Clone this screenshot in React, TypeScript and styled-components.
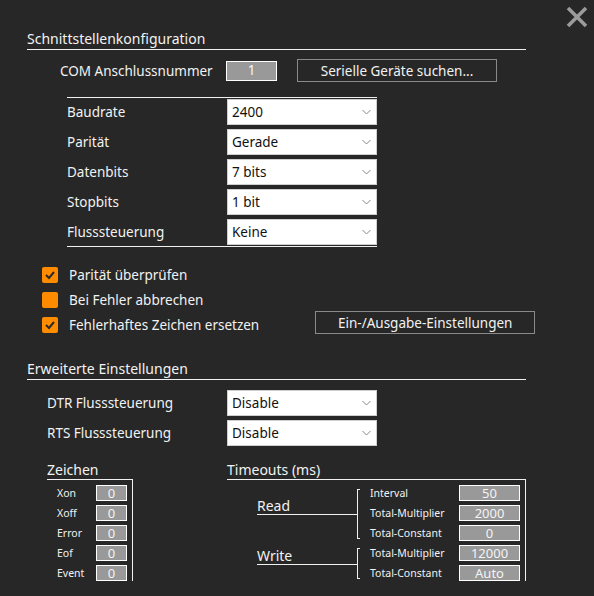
import React from "react";
import styled, { createGlobalStyle } from "styled-components";

const Global = createGlobalStyle`
  html, body { margin: 0; padding: 0; background: #272727; }
  body { font-family: "Noto Sans", "Open Sans", sans-serif; color: #f2f2f2; }
  * { box-sizing: border-box; }
`;

const Window = styled.div`
  position: relative;
  width: 594px;
  height: 596px;
  background: #272727;
  overflow: hidden;
`;

const Close = styled.button`
  position: absolute;
  top: 5px;
  right: 5px;
  width: 24px;
  height: 24px;
  padding: 0;
  border: 0;
  background: transparent;
  display: flex;
  align-items: center;
  justify-content: center;
`;

const Content = styled.div`
  height: 581px;
  overflow: hidden;
  padding-left: 27px;
  display: flex;
  flex-direction: column;
`;

const SectionTitle = styled.div<{ $top: number }>`
  width: 499px;
  margin-top: ${(p) => p.$top}px;
  height: 21px;
  line-height: 19px;
  font-size: 14px;
  border-bottom: 1px solid #f0f0f0;
`;

const ComRow = styled.div`
  display: flex;
  align-items: center;
  margin-top: 9px;
  padding-left: 33px;
  height: 23px;
`;

const Label = styled.div<{ $w: number }>`
  width: ${(p) => p.$w}px;
  font-size: 13.5px;
  white-space: nowrap;
`;

const ValueBox = styled.div<{ $w: number; $h: number; $size?: number }>`
  width: ${(p) => p.$w}px;
  height: ${(p) => p.$h}px;
  background: #999999;
  border: 1px solid #ffffff;
  color: #f4f4f4;
  font-size: ${(p) => p.$size ?? 13}px;
  display: flex;
  align-items: center;
  justify-content: center;
  line-height: 1;
`;

const OutlineButton = styled.button<{ $w: number }>`
  width: ${(p) => p.$w}px;
  height: 23px;
  background: transparent;
  border: 1px solid #8a8a8a;
  color: #f2f2f2;
  font-family: "Noto Sans", "Open Sans", sans-serif;
  font-size: 13.5px;
  padding: 0;
  line-height: 20px;
`;

const ButtonSlot = styled.div<{ $ml?: number; $mt?: number }>`
  margin-left: ${(p) => (p.$ml === undefined ? "auto" : `${p.$ml}px`)};
  margin-top: ${(p) => p.$mt ?? 0}px;
`;

const SettingsBlock = styled.div`
  margin-top: 15px;
  margin-left: 40px;
  width: 310px;
  border-top: 1px solid #f0f0f0;
  border-bottom: 1px solid #f0f0f0;
  padding: 1px 0 1px;
  display: flex;
  flex-direction: column;
  gap: 4px;
`;

const FieldRow = styled.div<{ $indent?: number; $top?: number }>`
  display: flex;
  align-items: center;
  height: 26px;
  margin-left: ${(p) => p.$indent ?? 0}px;
  margin-top: ${(p) => p.$top ?? 0}px;
`;

const SelectBox = styled.div`
  width: 150px;
  height: 26px;
  background: #ffffff;
  border: 1px solid #cfcfcf;
  color: #111;
  font-size: 13.5px;
  display: flex;
  align-items: center;
  justify-content: space-between;
  padding: 0 5px 0 4px;
`;

const CheckGroup = styled.div`
  margin-top: 20px;
  margin-left: 15px;
  display: flex;
  flex-direction: column;
  gap: 9px;
`;

const CheckRow = styled.div`
  display: flex;
  align-items: center;
  height: 16px;
`;

const Box = styled.span`
  width: 16px;
  height: 16px;
  border-radius: 2px;
  background: #ff8c00;
  display: flex;
  align-items: center;
  justify-content: center;
  flex: none;
`;

const CheckText = styled.span`
  margin-left: 11px;
  font-size: 13.5px;
  white-space: nowrap;
`;

const LowerGrid = styled.div`
  display: flex;
  margin-top: 14px;
  padding-left: 20px;
  flex: 1;
  min-height: 0;
`;

const Column = styled.div<{ $w: number; $ml: number }>`
  width: ${(p) => p.$w}px;
  margin-left: ${(p) => p.$ml}px;
  display: flex;
  flex-direction: column;
`;

const SubTitle = styled.div`
  height: 21px;
  line-height: 19px;
  font-size: 14px;
  border-bottom: 1px solid #f0f0f0;
`;

const FramedBody = styled.div`
  flex: 1;
  border-right: 1px solid #f0f0f0;
  padding-top: 5px;
  display: flex;
  flex-direction: column;
  gap: 4px;
`;

const SmallRow = styled.div<{ $pl: number }>`
  display: flex;
  align-items: center;
  height: 16px;
  padding-left: ${(p) => p.$pl}px;
`;

const SmallLabel = styled.span<{ $w: number }>`
  width: ${(p) => p.$w}px;
  font-size: 10.5px;
  white-space: nowrap;
`;

const Group = styled.div`
  display: flex;
  align-items: center;
  padding-left: 30px;
`;

const GroupTag = styled.div`
  width: 100px;
  padding-bottom: 14px;
  display: flex;
  flex-direction: column;
`;

const GroupName = styled.div`
  height: 18px;
  line-height: 17px;
  font-size: 14px;
  border-bottom: 1px solid #f0f0f0;
`;

const Bracket = styled.div<{ $top: number; $bottom: number }>`
  align-self: stretch;
  width: 3px;
  margin-top: ${(p) => p.$top}px;
  margin-bottom: ${(p) => p.$bottom}px;
  border: 1px solid #f0f0f0;
  border-right: 0;
`;

const GroupEntries = styled.div`
  display: flex;
  flex-direction: column;
  gap: 4px;
  margin-left: 10px;
`;

const Chevron = () => (
  <svg width="9" height="6" viewBox="0 0 9 6">
    <polyline points="0.5,1 4.5,5 8.5,1" fill="none" stroke="#888" strokeWidth="1" />
  </svg>
);

const Select = ({ value }: { value: string }) => (
  <SelectBox>
    <span>{value}</span>
    <Chevron />
  </SelectBox>
);

const Check = ({ on, text }: { on: boolean; text: string }) => (
  <>
    <Box>
      {on && (
        <svg width="12" height="10" viewBox="0 0 12 10">
          <polyline points="2,5 5,8 10,2" fill="none" stroke="#2a2a2a" strokeWidth="2" />
        </svg>
      )}
    </Box>
    <CheckText>{text}</CheckText>
  </>
);

const serial = [
  ["Baudrate", "2400"],
  ["Parität", "Gerade"],
  ["Datenbits", "7 bits"],
  ["Stopbits", "1 bit"],
  ["Flusssteuerung", "Keine"],
];

const chars = ["Xon", "Xoff", "Error", "Eof", "Event"];

const readRows = [
  ["Interval", "50"],
  ["Total-Multiplier", "2000"],
  ["Total-Constant", "0"],
];
const writeRows = [
  ["Total-Multiplier", "12000"],
  ["Total-Constant", "Auto"],
];

const Entries = ({ rows }: { rows: string[][] }) => (
  <GroupEntries>
    {rows.map(([l, v]) => (
      <SmallRow key={l} $pl={0}>
        <SmallLabel $w={89}>{l}</SmallLabel>
        <ValueBox $w={61} $h={16}>{v}</ValueBox>
      </SmallRow>
    ))}
  </GroupEntries>
);

export default function App() {
  return (
    <>
      <Global />
      <Window>
        <Close aria-label="Schließen">
          <svg width="22" height="22" viewBox="0 0 22 22">
            <path d="M2 2 L20 20 M20 2 L2 20" stroke="#9b9b9b" strokeWidth="3.6" />
          </svg>
        </Close>
        <Content>
          <SectionTitle $top={29}>Schnittstellenkonfiguration</SectionTitle>
          <ComRow>
            <Label $w={166}>COM Anschlussnummer</Label>
            <ValueBox $w={51} $h={20} $size={13.5}>1</ValueBox>
            <ButtonSlot $ml={20}>
              <OutlineButton $w={200}>Serielle Geräte suchen...</OutlineButton>
            </ButtonSlot>
          </ComRow>
          <SettingsBlock>
            {serial.map(([l, v]) => (
              <FieldRow key={l}>
                <Label $w={160}>{l}</Label>
                <Select value={v} />
              </FieldRow>
            ))}
          </SettingsBlock>
          <CheckGroup>
            <CheckRow>
              <Check on text="Parität überprüfen" />
            </CheckRow>
            <CheckRow>
              <Check on={false} text="Bei Fehler abbrechen" />
            </CheckRow>
            <CheckRow>
              <Check on text="Fehlerhaftes Zeichen ersetzen" />
              <ButtonSlot $ml={56} $mt={-5}>
                <OutlineButton $w={220}>Ein-/Ausgabe-Einstellungen</OutlineButton>
              </ButtonSlot>
            </CheckRow>
          </CheckGroup>
          <SectionTitle $top={26}>Erweiterte Einstellungen</SectionTitle>
          <FieldRow $indent={20} $top={10}>
            <Label $w={180}>DTR Flusssteuerung</Label>
            <Select value="Disable" />
          </FieldRow>
          <FieldRow $indent={20} $top={4}>
            <Label $w={180}>RTS Flusssteuerung</Label>
            <Select value="Disable" />
          </FieldRow>
          <LowerGrid>
            <Column $w={86} $ml={0}>
              <SubTitle>Zeichen</SubTitle>
              <FramedBody>
                {chars.map((c) => (
                  <SmallRow key={c} $pl={10}>
                    <SmallLabel $w={39}>{c}</SmallLabel>
                    <ValueBox $w={31} $h={16}>0</ValueBox>
                  </SmallRow>
                ))}
              </FramedBody>
            </Column>
            <Column $w={299} $ml={94}>
              <SubTitle>Timeouts (ms)</SubTitle>
              <FramedBody>
                <Group>
                  <GroupTag>
                    <GroupName>Read</GroupName>
                  </GroupTag>
                  <Bracket $top={4} $bottom={2} />
                  <Entries rows={readRows} />
                </Group>
                <Group>
                  <GroupTag>
                    <GroupName>Write</GroupName>
                  </GroupTag>
                  <Bracket $top={3} $bottom={2} />
                  <Entries rows={writeRows} />
                </Group>
              </FramedBody>
            </Column>
          </LowerGrid>
        </Content>
      </Window>
    </>
  );
}
